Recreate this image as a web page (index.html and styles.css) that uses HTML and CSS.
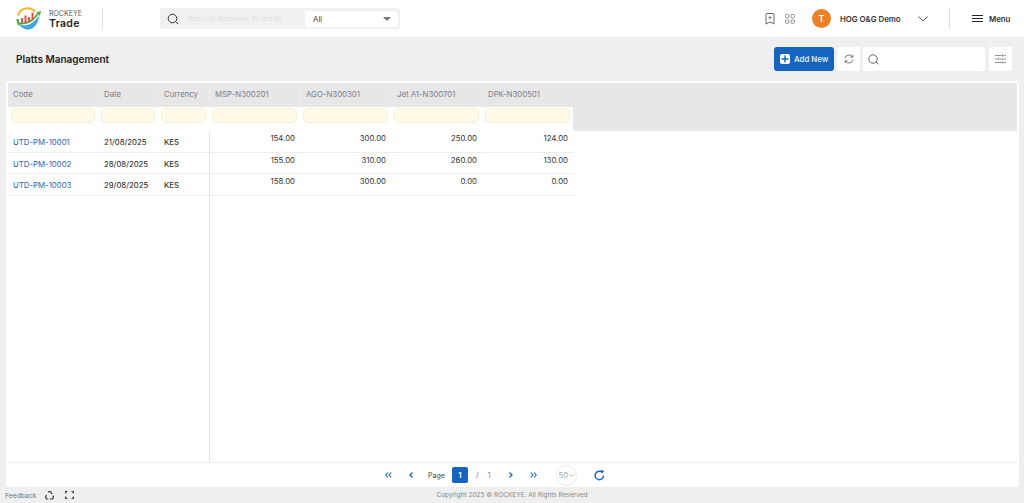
FILE: index.html
```html
<!DOCTYPE html>
<html lang="en">
<head>
    <meta charset="UTF-8">
    <meta name="viewport" content="width=device-width, initial-scale=1.0">
    <title>Platts Management</title>
    <link rel="stylesheet" href="styles.css">
</head>
<body>
    <header class="topbar">
        <div class="brand">
            <svg class="brand-logo" width="28" height="24" viewBox="0 0 28 24">
                <path d="M3 8.500A10 10 0 0 1 20 4.500" fill="none" stroke="#f4b82e" stroke-width="2"/>
                <path d="M2.500 12A10.500 10.500 0 0 0 4.500 18" fill="none" stroke="#5aa845" stroke-width="2.400"/>
                <path d="M4 16.500C10 20.500 17 18 24.500 8.500C23 17 19 22.500 13 22.500C9 22.500 5.500 20 4 16.500Z" fill="#3ea6e0"/>
                <path d="M5 16C12 17.500 18 14 23.500 6" fill="none" stroke="#5aa845" stroke-width="1.800"/>
                <path d="M21 5.500L26 4L25 9Z" fill="#5aa845"/>
                <rect class="brand-bar" x="6" y="11" width="2" height="5"/>
                <rect class="brand-bar" x="9.500" y="8.500" width="2" height="7.500"/>
                <rect class="brand-bar" x="13" y="10" width="2" height="5"/>
                <rect class="brand-bar" x="16.500" y="5.500" width="2" height="8"/>
            </svg>
            <div class="brand-text">
                <span class="brand-top">ROCKEYE</span>
                <span class="brand-name">Trade</span>
            </div>
        </div>
        <div class="global-search">
            <svg class="search-icon" width="12" height="12" viewBox="0 0 12 12">
                <circle cx="5.500" cy="5.500" r="4.300" fill="none" stroke="#333" stroke-width="1"/>
                <path d="M8.700 8.700L11 11" stroke="#333" stroke-width="1"/>
            </svg>
            <span class="search-hint">Search for Requisition, PO and Mc</span>
            <div class="search-select">
                <span>All</span>
                <span class="select-caret"></span>
            </div>
        </div>
        <div class="top-right">
            <svg class="top-icon" width="10" height="12" viewBox="0 0 10 12">
                <path d="M1 1.500Q1 .5 2 .5H8Q9 .5 9 1.500V11L5 9L1 11Z" fill="none" stroke="#666" stroke-width="1"/>
                <path d="M5 3V6.500M3.300 4.700H6.700" stroke="#666" stroke-width=".8"/>
            </svg>
            <svg class="top-icon apps" width="10" height="10" viewBox="0 0 10 10">
                <rect x=".5" y=".5" width="3.400" height="3.400" rx="1" fill="none" stroke="#777" stroke-width=".8"/>
                <rect x="6" y=".5" width="3.400" height="3.400" rx="1" fill="none" stroke="#777" stroke-width=".8"/>
                <rect x=".5" y="6" width="3.400" height="3.400" rx="1" fill="none" stroke="#777" stroke-width=".8"/>
                <rect x="6" y="6" width="3.400" height="3.400" rx="1" fill="none" stroke="#777" stroke-width=".8"/>
            </svg>
            <div class="avatar">T</div>
            <span class="user-name">HOG O&amp;G Demo</span>
            <svg class="user-chevron" width="10" height="6" viewBox="0 0 10 6">
                <path d="M.5 .5L5 5L9.500 .5" fill="none" stroke="#555" stroke-width="1"/>
            </svg>
            <div class="top-divider"></div>
            <div class="menu-button">
                <span class="burger"><i></i><i></i><i></i></span>
                <span>Menu</span>
            </div>
        </div>
    </header>

    <section class="title-row">
        <h1 class="page-title">Platts Management</h1>
        <div class="actions">
            <button class="add-button">
                <span class="add-plus">
                    <svg width="10" height="10" viewBox="0 0 10 10"><path d="M5 1.500V8.500M1.500 5H8.500" stroke="#1565c0" stroke-width="1.400"/></svg>
                </span>
                Add New
            </button>
            <button class="icon-button">
                <svg width="10" height="10" viewBox="0 0 10 10">
                    <path d="M1 4.300A4 4 0 0 1 8.300 2.800M9 5.700A4 4 0 0 1 1.700 7.200" fill="none" stroke="#555" stroke-width=".8"/>
                    <path d="M8.800 .8V3.200H6.400M1.200 9.200V6.800H3.600" fill="none" stroke="#555" stroke-width=".8"/>
                </svg>
            </button>
            <div class="list-search">
                <svg width="11" height="11" viewBox="0 0 11 11">
                    <circle cx="5" cy="5" r="4.200" fill="none" stroke="#555" stroke-width=".9"/>
                    <path d="M8 8L10.300 10.300" stroke="#555" stroke-width=".9"/>
                </svg>
            </div>
            <button class="icon-button filter-button">
                <svg width="11" height="10" viewBox="0 0 11 10">
                    <path d="M0 1.500H6.500M8.500 1.500H11M0 5H2.500M4.500 5H11M0 8.500H6M8 8.500H11" stroke="#777" stroke-width=".8"/>
                    <path d="M7.500 .3V2.700M3.500 3.800V6.200M7 7.300V9.700" stroke="#777" stroke-width=".9"/>
                </svg>
            </button>
        </div>
    </section>

    <main class="card">
        <div class="grid-head">
            <div class="head-row">
                <div class="col-code">Code</div>
                <div class="col-date">Date</div>
                <div class="col-cur">Currency</div>
                <div class="col-num">MSP-N300201</div>
                <div class="col-num">AGO-N300301</div>
                <div class="col-num">Jet A1-N300701</div>
                <div class="col-num">DPK-N300501</div>
            </div>
            <div class="filter-row">
                <div class="col-code"><span class="filter-input"></span></div>
                <div class="col-date"><span class="filter-input"></span></div>
                <div class="col-cur"><span class="filter-input"></span></div>
                <div class="col-num"><span class="filter-input"></span></div>
                <div class="col-num"><span class="filter-input"></span></div>
                <div class="col-num"><span class="filter-input"></span></div>
                <div class="col-num"><span class="filter-input"></span></div>
            </div>
        </div>
        <div class="grid-body">
            <div class="frozen">
                <div class="row">
                    <a class="col-code">UTD-PM-10001</a>
                    <div class="col-date">21/08/2025</div>
                    <div class="col-cur">KES</div>
                </div>
                <div class="row">
                    <a class="col-code">UTD-PM-10002</a>
                    <div class="col-date">28/08/2025</div>
                    <div class="col-cur">KES</div>
                </div>
                <div class="row">
                    <a class="col-code">UTD-PM-10003</a>
                    <div class="col-date">29/08/2025</div>
                    <div class="col-cur">KES</div>
                </div>
            </div>
            <div class="scrolling">
                <div class="row">
                    <div class="col-num">154.00</div>
                    <div class="col-num">300.00</div>
                    <div class="col-num">250.00</div>
                    <div class="col-num">124.00</div>
                </div>
                <div class="row">
                    <div class="col-num">155.00</div>
                    <div class="col-num">310.00</div>
                    <div class="col-num">260.00</div>
                    <div class="col-num">130.00</div>
                </div>
                <div class="row">
                    <div class="col-num">158.00</div>
                    <div class="col-num">300.00</div>
                    <div class="col-num">0.00</div>
                    <div class="col-num">0.00</div>
                </div>
            </div>
        </div>
        <div class="pager">
            <svg class="pager-arrow" width="7" height="6" viewBox="0 0 7 6"><path d="M3 .5L.8 3L3 5.500M6.200 .5L4 3L6.200 5.500" fill="none" stroke="#1565c0" stroke-width="1.100"/></svg>
            <svg class="pager-arrow prev" width="4" height="6" viewBox="0 0 4 6"><path d="M3.500 .5L1 3L3.500 5.500" fill="none" stroke="#1565c0" stroke-width="1.300"/></svg>
            <span class="page-label">Page</span>
            <span class="page-current">1</span>
            <span class="page-total"><i>/</i><i>1</i></span>
            <svg class="pager-arrow next" width="4" height="6" viewBox="0 0 4 6"><path d="M.5 .5L3 3L.5 5.500" fill="none" stroke="#1565c0" stroke-width="1.300"/></svg>
            <svg class="pager-arrow last" width="7" height="6" viewBox="0 0 7 6"><path d="M.8 .5L3 3L.8 5.500M4 .5L6.200 3L4 5.500" fill="none" stroke="#1565c0" stroke-width="1.100"/></svg>
            <span class="page-size">50
                <svg width="5" height="3" viewBox="0 0 5 3"><path d="M.4 .4L2.500 2.500L4.600 .4" fill="none" stroke="#999" stroke-width=".7"/></svg>
            </span>
            <svg class="pager-reload" width="11" height="11" viewBox="0 0 11 11">
                <path d="M9.500 5.500A4.200 4.200 0 1 1 7.500 1.900" fill="none" stroke="#1565c0" stroke-width="1.400"/>
                <path d="M6.500 .1L10.200 .7L8 3.800Z" fill="#1565c0"/>
            </svg>
        </div>
    </main>

    <footer class="footer">
        <div class="footer-left">
            <span>Feedback</span>
            <svg width="9" height="9" viewBox="0 0 9 9">
                <path d="M3 1L4.500 .5L6 1L7 3M8 4.500L8.500 6.500L7.500 8H5M3.500 8H1.500L.5 6.500L1.500 4" fill="none" stroke="#333" stroke-width="1.200"/>
            </svg>
            <svg class="expand" width="9" height="8" viewBox="0 0 9 8">
                <path d="M0 0H3L0 3ZM9 0H6L9 3ZM0 8H3L0 5ZM9 8H6L9 5Z" fill="#444"/>
            </svg>
        </div>
        <div class="copyright">Copyright 2025 © ROCKEYE. All Rights Reserved</div>
    </footer>
</body>
</html>
```

FILE: styles.css
```css
* {
    margin: 0;
    padding: 0;
    box-sizing: border-box;
}

html, body {
    height: 503px;
    overflow: hidden;
}

body {
    background: #efefef;
    color: #222;
    font-family: 'Inter', 'Open Sans', sans-serif;
    font-size: 7.800px;
    display: flex;
    flex-direction: column;
}

/* top bar */
.topbar {
    height: 37px;
    background: #fff;
    display: flex;
    align-items: center;
    padding-left: 15px;
}

.brand {
    width: 145px;
    display: flex;
    align-items: center;
    gap: 6px;
    height: 21px;
    background: linear-gradient(#ddd, #ddd) no-repeat 87px 0 / 1px 21px;
}

.brand-bar {
    fill: #e4503f;
}

.brand-text {
    display: flex;
    flex-direction: column;
    line-height: 9px;
}

.brand-top {
    font-size: 7px;
    color: #555;
}

.brand-name {
    font-size: 10.500px;
    font-weight: 600;
    letter-spacing: .3px;
    color: #222;
    line-height: 11px;
}

.global-search {
    width: 240px;
    height: 21px;
    background: #f1f1f1;
    border-radius: 3px;
    display: flex;
    align-items: center;
    padding: 0 2px 0 7px;
}

.search-hint {
    margin-left: 9px;
    font-size: 5.800px;
    font-style: italic;
    color: #ddd;
    white-space: nowrap;
}

.search-select {
    width: 93px;
    height: 16px;
    margin-left: auto;
    background: #fff;
    border-radius: 3px;
    display: flex;
    align-items: center;
    justify-content: space-between;
    padding: 0 7px 0 8px;
    color: #444;
}

.select-caret {
    border-left: 4px solid transparent;
    border-right: 4px solid transparent;
    border-top: 4px solid #777;
}

.top-right {
    margin-left: auto;
    display: flex;
    align-items: center;
    height: 21px;
}

.top-icon.apps {
    margin-left: 10px;
}

.avatar {
    width: 19px;
    height: 19px;
    margin-left: 17px;
    border-radius: 50%;
    background: #ec8125;
    color: #fff;
    font-size: 9px;
    font-weight: 600;
    display: flex;
    align-items: center;
    justify-content: center;
}

.user-name {
    margin-left: 9px;
    font-weight: 600;
    color: #333;
    width: 71px;
    white-space: nowrap;
}

.user-chevron {
    margin-left: 7px;
}

.top-divider {
    width: 1px;
    height: 21px;
    background: #ddd;
    margin: 0 22px 0 21px;
}

.menu-button {
    display: flex;
    align-items: center;
    gap: 6px;
    width: 52px;
    font-weight: 600;
    color: #333;
}

.burger {
    width: 11px;
    display: flex;
    flex-direction: column;
    gap: 2px;
}

.burger i {
    display: block;
    height: 1px;
    background: #222;
}

/* title row */
.title-row {
    height: 44px;
    padding: 10px 12px 0 16px;
    display: flex;
    justify-content: space-between;
}

.page-title {
    font-size: 10px;
    font-weight: 600;
    color: #222;
    line-height: 25px;
}

.actions {
    display: flex;
    gap: 3px;
    height: 24px;
}

.add-button {
    width: 60px;
    background: #1565c0;
    color: #dfe9f7;
    border: none;
    border-radius: 3px;
    font: inherit;
    font-weight: 600;
    display: flex;
    align-items: center;
    gap: 4px;
    padding-left: 6px;
    white-space: nowrap;
}

.add-plus {
    width: 10px;
    height: 10px;
    flex: none;
    background: #fff;
    border-radius: 2px;
    display: flex;
}

.icon-button {
    width: 23px;
    background: #fff;
    border: none;
    border-radius: 2px;
    display: flex;
    align-items: center;
    justify-content: center;
}

.list-search {
    width: 122px;
    background: #fff;
    border-radius: 2px;
    display: flex;
    align-items: center;
    padding-left: 5px;
}

.filter-button {
    margin-left: 1px;
}

/* grid */
.card {
    height: 406px;
    margin: 0 5px 0 6px;
    padding: 2px 2px 0;
    background: #fff;
    border-radius: 3px;
    display: flex;
    flex-direction: column;
}

.head-row, .filter-row, .row {
    display: flex;
}

.col-code { width: 90px; }
.col-date { width: 60px; }
.col-cur { width: 51px; }
.col-num { width: 91px; }

.grid-head {
    background: #e7e7e7;
    color: #7d7d8c;
}

.head-row {
    height: 24px;
    line-height: 22px;
}

.head-row div {
    padding-left: 5px;
    border-left: 1px solid #ececec;
    white-space: nowrap;
}

.head-row div:first-child {
    border-left: none;
}

.filter-row {
    height: 24px;
    width: 565px;
    background: #fff;
}

.filter-row div {
    padding: 1px 3px;
}

.filter-input {
    display: block;
    height: 15px;
    background: #fffbe6;
    border: 1px solid #f5efd3;
    border-radius: 5px;
}

.grid-body {
    flex: 1;
    display: flex;
    min-height: 0;
}

.frozen {
    width: 202px;
    border-right: 1px solid #e6e6e6;
}

.scrolling {
    width: 364px;
}

.row {
    height: 21.500px;
    border-bottom: 1px solid #eeeeee;
    line-height: 22px;
    color: #222;
}

.row a {
    color: #1f66b8;
    padding-left: 5px;
}

.frozen .col-date, .frozen .col-cur {
    padding-left: 6px;
}

.frozen .col-cur {
    font-weight: 500;
    color: #333;
}

.scrolling .col-num {
    text-align: right;
    padding-right: 6px;
    line-height: 14px;
    color: #333;
}

.pager {
    height: 25px;
    border-top: 1px solid #eee;
    display: flex;
    align-items: center;
    padding-left: 377px;
    color: #444;
}

.pager-arrow.prev {
    margin-left: 17px;
}

.page-label {
    margin-left: 15px;
    font-size: 7px;
}

.page-current {
    width: 16px;
    height: 16px;
    margin-left: 7px;
    background: #1565c0;
    border-radius: 2px;
    color: #fff;
    font-weight: 600;
    display: flex;
    align-items: center;
    justify-content: center;
}

.page-total {
    margin-left: 8px;
    color: #888;
}

.page-total i {
    font-style: normal;
    margin-right: 9px;
}

.pager-arrow.next {
    margin-left: 9px;
}

.pager-arrow.last {
    margin-left: 17px;
}

.page-size {
    width: 21px;
    height: 21px;
    margin-left: 19px;
    border: 1px solid #e9e9e9;
    border-radius: 50%;
    color: #aaa;
    display: flex;
    align-items: center;
    justify-content: center;
    gap: 1px;
}

.pager-reload {
    margin-left: 17px;
}

/* footer */
.footer {
    flex: 1;
    position: relative;
    display: flex;
    align-items: center;
    padding-left: 5px;
    font-size: 6.800px;
    color: #777;
}

.footer-left {
    display: flex;
    align-items: center;
    gap: 8px;
}

.expand {
    margin-left: 3px;
}

.copyright {
    position: absolute;
    left: 0;
    right: 0;
    text-align: center;
    font-size: 6.500px;
    color: #888;
}
```
